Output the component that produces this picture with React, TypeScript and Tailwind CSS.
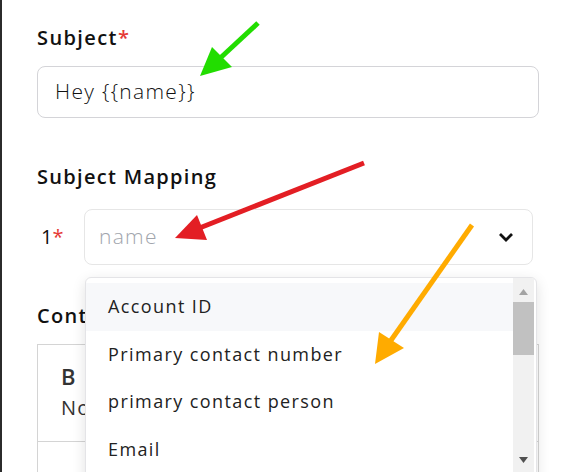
import React from 'react';

const font = { fontFamily: '"Open Sans", "Noto Sans", sans-serif' };

const options = ['Account ID', 'Primary contact number', 'primary contact person', 'Email'];

function Arrows() {
  return (
    <svg className="pointer-events-none absolute inset-0" width="571" height="472" viewBox="0 0 571 472">
      {/* green */}
      <line x1="256" y1="23" x2="214" y2="62" stroke="#22dd00" strokeWidth="5" />
      <polygon points="198,76 210,47 230,67" fill="#22dd00" />
      {/* red */}
      <line x1="362" y1="163" x2="195" y2="229" stroke="#e31e24" strokeWidth="5" />
      <polygon points="173,238 195,215 205,240" fill="#e31e24" />
      {/* orange */}
      <line x1="470" y1="225" x2="385" y2="346" stroke="#ffab00" strokeWidth="5" />
      <polygon points="373,364 377,332 402,348" fill="#ffab00" />
    </svg>
  );
}

function Dropdown() {
  return (
    <div className="absolute left-[83px] top-[277px] w-[452px] h-[220px] rounded-t-md border border-[#e4e4e7] bg-white shadow-[0_4px_14px_rgba(0,0,0,0.12)] overflow-hidden">
      <div className="flex">
        <div className="flex-1 pt-[5px]">
          {options.map((o, i) => (
            <div
              key={o}
              className={`h-[47.5px] flex items-center pl-[22px] text-[18px] tracking-[1.4px] text-[#222] ${i === 0 ? 'bg-[#f7f8fa]' : ''}`}
            >
              {o}
            </div>
          ))}
        </div>
        <div className="w-[21px] mr-[2px] h-[195px] bg-[#f1f1f1] flex flex-col items-center">
          <svg width="21" height="24" viewBox="0 0 21 24" className="shrink-0">
            <polygon points="6,17 15,17 10.5,11" fill="#a3a3a3" />
          </svg>
          <div className="w-[21px] h-[53px] bg-[#c1c1c1]" />
          <div className="flex-1" />
          <svg width="21" height="20" viewBox="0 0 21 20" className="shrink-0">
            <polygon points="6,4 15,4 10.5,10" fill="#505050" />
          </svg>
        </div>
      </div>
    </div>
  );
}

export default function App() {
  return (
    <div className="relative w-[571px] h-[472px] overflow-hidden bg-white border-l-2 border-[#2b2b2b]" style={font}>
      <div className="pl-[35px] pr-[30px] pt-[24px]">
        <div className="text-[20px] leading-[28px] font-semibold tracking-[1.4px] text-[#111]">
          Subject<span className="text-[#e53935]">*</span>
        </div>
        <div className="mt-[14px] h-[52px] w-[502px] rounded-[8px] border border-[#d4d4d8] flex items-center pl-[17px] text-[21px] font-light tracking-[1.3px] text-[#111]">
          Hey {'{{name}}'}
        </div>
        <div className="mt-[45px] text-[20px] leading-[28px] font-semibold tracking-[1.3px] text-[#111]">Subject Mapping</div>
        <div className="mt-[18px] flex items-center">
          <div className="w-[47px] pl-[4px] text-[20px] font-medium text-[#111]">
            1<span className="text-[#e53935]">*</span>
          </div>
          <div className="h-[56px] w-[449px] rounded-[8px] border border-[#e6e6e6] flex items-center justify-between pl-[14px] pr-[18px]">
            <span className="text-[21px] font-light tracking-[1.3px] text-[#a1a5ad]">name</span>
            <svg width="16" height="10" viewBox="0 0 16 10">
              <path d="M2 2 L8 8 L14 2" fill="none" stroke="#111" strokeWidth="2.8" />
            </svg>
          </div>
        </div>
        <div className="mt-[37px] text-[20px] leading-[28px] font-semibold tracking-[1.3px] text-[#111]">Content</div>
        <div className="mt-[14px] w-[502px] border border-[#d4d4d4]">
          <div className="h-[97px] pl-[23px] pt-[16px] border-b border-[#d4d4d4]">
            <div className="text-[22px] leading-[30px] font-semibold text-[#333]">B</div>
            <div className="text-[20px] leading-[34px] tracking-[1.3px] text-[#333]">No</div>
          </div>
          <div className="h-[60px]" />
        </div>
      </div>
      <Dropdown />
      <Arrows />
    </div>
  );
}
